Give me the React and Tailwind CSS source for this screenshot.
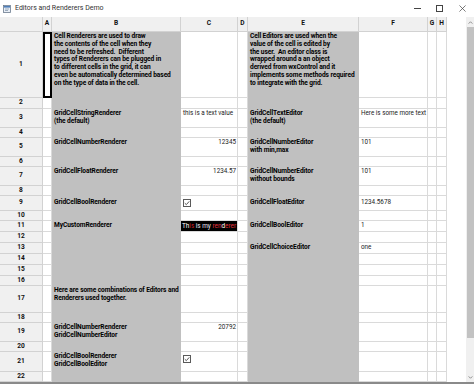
import React from 'react';

// one entry per grid row: label, B/C/E/F contents
const rows = [
  {
    n: 1,
    b: [
      'Cell Renderers are used to draw',
      'the contents of the cell when they',
      'need to be refreshed.  Different',
      'types of Renderers can be plugged in',
      'to different cells in the grid, it can',
      'even be automatically determined based',
      'on the type of data in the cell.',
    ],
    e: [
      'Cell Editors are used when the',
      'value of the cell is edited by',
      'the user.  An editor class is',
      'wrapped around a an object',
      'derived from wxControl and it',
      'implements some methods required',
      'to integrate with the grid.',
    ],
  },
  { n: 2 },
  {
    n: 3,
    b: ['GridCellStringRenderer', '(the default)'],
    c: { text: 'this is a text value' },
    e: ['GridCellTextEditor', '(the default)'],
    f: 'Here is some more text',
  },
  { n: 4 },
  {
    n: 5,
    b: ['GridCellNumberRenderer'],
    c: { text: '12345', right: true },
    e: ['GridCellNumberEditor', 'with min,max'],
    f: '101',
  },
  { n: 6 },
  {
    n: 7,
    b: ['GridCellFloatRenderer'],
    c: { text: '1234.57', right: true },
    e: ['GridCellNumberEditor', 'without bounds'],
    f: '101',
  },
  { n: 8 },
  {
    n: 9,
    pad: true,
    b: ['GridCellBoolRenderer'],
    c: { check: true },
    e: ['GridCellFloatEditor'],
    f: '1234.5678',
  },
  { n: 10 },
  {
    n: 11,
    b: ['MyCustomRenderer'],
    c: { custom: true },
    e: ['GridCellBoolEditor'],
    f: '1',
  },
  { n: 12 },
  { n: 13, e: ['GridCellChoiceEditor'], f: 'one' },
  { n: 14 },
  { n: 15 },
  { n: 16 },
  { n: 17, b: ['Here are some combinations of Editors and', 'Renderers used together.'] },
  { n: 18 },
  {
    n: 19,
    b: ['GridCellNumberRenderer', 'GridCellNumberEditor'],
    c: { text: '20792', right: true },
  },
  { n: 20 },
  {
    n: 21,
    b: ['GridCellBoolRenderer', 'GridCellBoolEditor'],
    c: { check: true },
  },
  { n: 22 },
];

const colLetters = ['A', 'B', 'C', 'D', 'E', 'F', 'G', 'H'];

const Checkbox = () => (
  <div className="w-[8px] h-[8px] border border-[#5a5a5a] bg-white flex items-center justify-center">
    <svg viewBox="0 0 8 8" className="w-[6px] h-[6px]">
      <path d="M1 4.2 L3.1 6.2 L7 1.8" fill="none" stroke="#333" strokeWidth="1.1" />
    </svg>
  </div>
);

const CustomRender = () => (
  <div className="bg-black h-full w-full pl-[1px] leading-[10px] text-[6.4px] whitespace-pre">
    <span className="text-white">Th</span>
    <span className="text-[#c8202a]">is</span>
    <span className="text-[#e6e6f4]"> is my </span>
    <span className="text-[#e0303a]">ren</span>
    <span className="text-white">d</span>
    <span className="text-[#e0303a]">erer</span>
  </div>
);

const BoldLines = ({ lines, pad }) => (
  <div className={`pl-[2px] ${pad ? 'pt-[3px]' : 'pt-[1px]'} font-bold text-black text-[6.6px] leading-[7.8px] tracking-[-0.08px] whitespace-pre overflow-hidden`}>
    {lines.map((l, i) => (
      <div key={i}>{l}</div>
    ))}
  </div>
);

const TitleBar = () => (
  <div className="h-[17px] flex items-center bg-white text-[#333]">
    <svg viewBox="0 0 8 8" className="w-[8px] h-[8px] ml-[3px]">
      <rect x="0.5" y="0.5" width="7" height="7" fill="#e8eef6" stroke="#6b7b8e" strokeWidth="0.8" />
      <rect x="1" y="1" width="6" height="1.6" fill="#4f7fb8" />
      <rect x="2" y="3.6" width="4" height="0.8" fill="#8a9bb0" />
      <rect x="2" y="5.2" width="3" height="0.8" fill="#8a9bb0" />
    </svg>
    <div className="ml-[4px] text-[7px] leading-none">Editors and Renderers Demo</div>
    <div className="flex-1" />
    <div className="w-[22px] flex justify-center">
      <div className="w-[7px] h-[0.8px] bg-[#444]" />
    </div>
    <div className="w-[22px] flex justify-center">
      <div className="w-[7px] h-[7px] border border-[#444]" />
    </div>
    <div className="w-[24px] flex justify-center">
      <svg viewBox="0 0 8 8" className="w-[7px] h-[7px]">
        <path d="M0.5 0.5 L7.5 7.5 M7.5 0.5 L0.5 7.5" stroke="#444" strokeWidth="0.8" />
      </svg>
    </div>
  </div>
);

const Grid = () => {
  const line = 'border-r border-b border-[#dadada]';
  const head = 'bg-[#f0f0f0] border-r border-b border-[#d2d2d2] flex items-center justify-center font-bold text-[#111] text-[6.6px]';
  const gray = 'bg-[#c0c0c0]';
  const plain = 'text-[6.3px] leading-[7.8px] text-[#222] whitespace-pre';

  return (
    <div className="grid grid-cols-[43px_9px_129px_57px_10px_111px_69px_9px_10px] grid-rows-[15px_66px_11px_19px_10px_19px_10px_19px_10px_15px_10px_11px_11px_11px_11px_11px_10px_27px_10px_19px_10px_20px_10px] w-[447px]">
      <div className={head} />
      {colLetters.map((c) => (
        <div key={c} className={head}>
          {c}
        </div>
      ))}

      {rows.map((r) => (
        <React.Fragment key={r.n}>
          <div className={head}>{r.n}</div>
          {r.n === 1 ? (
            <div className="border-2 border-black bg-white" />
          ) : (
            <div className={`${line} bg-white`} />
          )}
          <div className={gray}>{r.b && <BoldLines lines={r.b} pad={r.pad} />}</div>
          <div className={`${line} bg-white overflow-hidden`}>
            {r.c && r.c.text && (
              <div className={`${r.c.right ? 'text-right pr-[1px]' : 'pl-[2px]'} ${r.pad ? 'pt-[3px]' : 'pt-[1px]'} ${plain}`}>
                {r.c.text}
              </div>
            )}
            {r.c && r.c.check && (
              <div className="pl-[2px] pt-[3px]">
                <Checkbox />
              </div>
            )}
            {r.c && r.c.custom && <CustomRender />}
          </div>
          <div className={`${line} bg-white`} />
          <div className={gray}>{r.e && <BoldLines lines={r.e} pad={r.pad} />}</div>
          <div className={`${line} bg-white overflow-hidden`}>
            {r.f && <div className={`pl-[2px] ${r.pad ? 'pt-[3px]' : 'pt-[1px]'} ${plain}`}>{r.f}</div>}
          </div>
          <div className={`${line} bg-white`} />
          <div className={`${line} bg-white`} />
        </React.Fragment>
      ))}
    </div>
  );
};

const Scrollbar = () => (
  <div className="w-[8px] bg-[#f0f0f0] flex flex-col items-center">
    <div className="h-[10px] flex items-center justify-center">
      <svg viewBox="0 0 6 4" className="w-[5px] h-[3px]">
        <path d="M0.5 3.5 L3 1 L5.5 3.5" fill="none" stroke="#606060" strokeWidth="0.9" />
      </svg>
    </div>
    <div className="w-[7px] h-[311px] bg-[#c2c2c2]" />
    <div className="flex-1" />
    <div className="h-[10px] flex items-center justify-center">
      <svg viewBox="0 0 6 4" className="w-[5px] h-[3px]">
        <path d="M0.5 0.5 L3 3 L5.5 0.5" fill="none" stroke="#606060" strokeWidth="0.9" />
      </svg>
    </div>
  </div>
);

export default function App() {
  return (
    <div className="w-[474px] h-[384px] overflow-hidden bg-white font-['Roboto','Noto_Sans',sans-serif] flex flex-col">
      <TitleBar />
      <div className="flex h-[365px]">
        <div className="w-[466px] bg-white">
          <Grid />
        </div>
        <Scrollbar />
      </div>
      <div className="h-[2px] bg-[#8a8a8a]" />
    </div>
  );
}
